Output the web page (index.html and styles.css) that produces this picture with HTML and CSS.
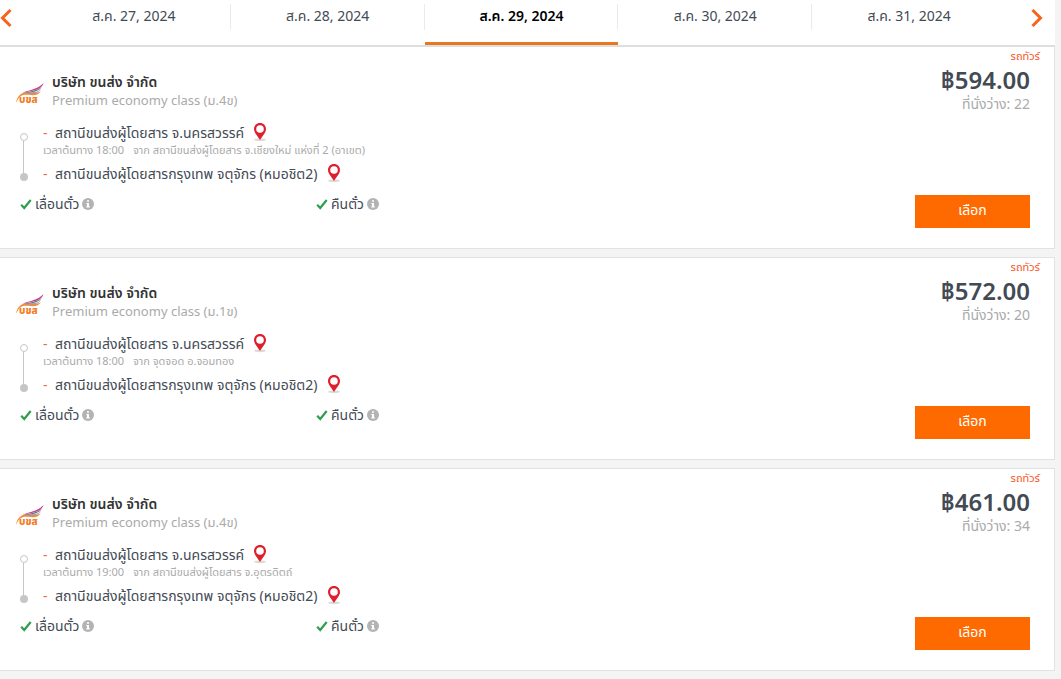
FILE: index.html
```html
<!DOCTYPE html>
<html lang="th">
<head>
<meta charset="utf-8">
<meta name="viewport" content="width=device-width, initial-scale=1">
<title>ส.ค. 29, 2024</title>
<link rel="stylesheet" href="styles.css">
</head>
<body>
<svg class="sprite" aria-hidden="true">
  <symbol id="logo" viewBox="0 0 28 22">
    <path d="M0 20C1 12.500 6 9 12 9C17 9 22 10.500 25 8C22 13 17 12.500 12 11.800C6 11 3 13 0 20Z" fill="#f08a3c"/>
    <path d="M7 9.500C14 7 22 6 27.500 0C26 6.500 17 8 7 9.500Z" fill="#c8408c"/>
    <path d="M6 10C14 8.300 21 8 26 3.500C23.500 9 15 9.500 6 10Z" fill="#6f7480"/>
    <path d="M9 10.200C15 9.600 21 9.800 25 6C22.500 10.500 16 11 9 10.200Z" fill="#85a5bd"/>
  </symbol>
  <symbol id="pin" viewBox="0 0 14 19">
    <ellipse cx="7" cy="16.800" rx="6" ry="1.400" fill="#dedbd5"/>
    <path d="M7 0C3.400 0 1 2.700 1 6C1 9.500 4 12 7 17C10 12 13 9.500 13 6C13 2.700 10.600 0 7 0Z" fill="#df1f2d"/>
    <circle cx="7" cy="6" r="3.800" fill="#fff"/>
  </symbol>
  <symbol id="check" viewBox="0 0 12 12">
    <path d="M1.200 6.800L4.200 10L10.700 2" fill="none" stroke="#2f9e4f" stroke-width="2.200"/>
  </symbol>
  <symbol id="info" viewBox="0 0 12 12">
    <circle cx="6" cy="6" r="6" fill="#b3b3b3"/>
    <path d="M5 2.200h2v1.600H5zM4.300 4.900H7v3.400h.8v1.200H4.300V8.300H5V6.100h-.7z" fill="#fff"/>
  </symbol>
  <symbol id="line" viewBox="0 0 10 50">
    <path d="M4.500 9V42" stroke="#c6c6c6"/>
    <circle cx="5" cy="5" r="3.500" fill="#fff" stroke="#c6c6c6"/>
    <circle cx="5" cy="45" r="4" fill="#c6c6c6"/>
  </symbol>
</svg>

<main class="page">
  <nav class="dates" aria-label="วันเดินทาง">
    <button class="arrow prev" type="button" aria-label="ก่อนหน้า"><svg viewBox="0 0 12 20"><path d="M10.500 2L2.500 10L10.500 18"/></svg></button>
    <a class="date" href="#">ส.ค. 27, 2024</a>
    <a class="date" href="#">ส.ค. 28, 2024</a>
    <a class="date active" href="#" aria-current="date">ส.ค. 29, 2024</a>
    <a class="date" href="#">ส.ค. 30, 2024</a>
    <a class="date" href="#">ส.ค. 31, 2024</a>
    <button class="arrow next" type="button" aria-label="ถัดไป"><svg viewBox="0 0 12 20"><path d="M1.500 2L9.500 10L1.500 18"/></svg></button>
  </nav>

  <article class="trip">
    <div class="details">
      <header class="operator">
        <div class="logo"><svg><use href="#logo"/></svg><span>บขส</span></div>
        <div><h2>บริษัท ขนส่ง จำกัด</h2><p>Premium economy class (ม.4ข)</p></div>
      </header>
      <div class="route">
        <svg class="track"><use href="#line"/></svg>
        <div>
          <p class="stop"><span class="dash">-</span>สถานีขนส่งผู้โดยสาร จ.นครสวรรค์<svg class="pin"><use href="#pin"/></svg></p>
          <p class="origin">เวลาต้นทาง 18:00 <span>จาก สถานีขนส่งผู้โดยสาร จ.เชียงใหม่ แห่งที่ 2 (อาเขต)</span></p>
          <p class="stop"><span class="dash">-</span>สถานีขนส่งผู้โดยสารกรุงเทพ จตุจักร (หมอชิต2)<svg class="pin"><use href="#pin"/></svg></p>
        </div>
      </div>
      <ul class="terms">
        <li><svg><use href="#check"/></svg>เลื่อนตั๋ว<svg><use href="#info"/></svg></li>
        <li><svg><use href="#check"/></svg>คืนตั๋ว<svg><use href="#info"/></svg></li>
      </ul>
    </div>
    <div class="booking">
      <p class="type">รถทัวร์</p>
      <p class="price">฿594.00</p>
      <p class="seats">ที่นั่งว่าง: 22</p>
      <button class="select" type="button">เลือก</button>
    </div>
  </article>

  <article class="trip">
    <div class="details">
      <header class="operator">
        <div class="logo"><svg><use href="#logo"/></svg><span>บขส</span></div>
        <div><h2>บริษัท ขนส่ง จำกัด</h2><p>Premium economy class (ม.1ข)</p></div>
      </header>
      <div class="route">
        <svg class="track"><use href="#line"/></svg>
        <div>
          <p class="stop"><span class="dash">-</span>สถานีขนส่งผู้โดยสาร จ.นครสวรรค์<svg class="pin"><use href="#pin"/></svg></p>
          <p class="origin">เวลาต้นทาง 18:00 <span>จาก จุดจอด อ.จอมทอง</span></p>
          <p class="stop"><span class="dash">-</span>สถานีขนส่งผู้โดยสารกรุงเทพ จตุจักร (หมอชิต2)<svg class="pin"><use href="#pin"/></svg></p>
        </div>
      </div>
      <ul class="terms">
        <li><svg><use href="#check"/></svg>เลื่อนตั๋ว<svg><use href="#info"/></svg></li>
        <li><svg><use href="#check"/></svg>คืนตั๋ว<svg><use href="#info"/></svg></li>
      </ul>
    </div>
    <div class="booking">
      <p class="type">รถทัวร์</p>
      <p class="price">฿572.00</p>
      <p class="seats">ที่นั่งว่าง: 20</p>
      <button class="select" type="button">เลือก</button>
    </div>
  </article>

  <article class="trip">
    <div class="details">
      <header class="operator">
        <div class="logo"><svg><use href="#logo"/></svg><span>บขส</span></div>
        <div><h2>บริษัท ขนส่ง จำกัด</h2><p>Premium economy class (ม.4ข)</p></div>
      </header>
      <div class="route">
        <svg class="track"><use href="#line"/></svg>
        <div>
          <p class="stop"><span class="dash">-</span>สถานีขนส่งผู้โดยสาร จ.นครสวรรค์<svg class="pin"><use href="#pin"/></svg></p>
          <p class="origin">เวลาต้นทาง 19:00 <span>จาก สถานีขนส่งผู้โดยสาร จ.อุตรดิตถ์</span></p>
          <p class="stop"><span class="dash">-</span>สถานีขนส่งผู้โดยสารกรุงเทพ จตุจักร (หมอชิต2)<svg class="pin"><use href="#pin"/></svg></p>
        </div>
      </div>
      <ul class="terms">
        <li><svg><use href="#check"/></svg>เลื่อนตั๋ว<svg><use href="#info"/></svg></li>
        <li><svg><use href="#check"/></svg>คืนตั๋ว<svg><use href="#info"/></svg></li>
      </ul>
    </div>
    <div class="booking">
      <p class="type">รถทัวร์</p>
      <p class="price">฿461.00</p>
      <p class="seats">ที่นั่งว่าง: 34</p>
      <button class="select" type="button">เลือก</button>
    </div>
  </article>
</main>
</body>
</html>
```

FILE: styles.css
```css
* { box-sizing: border-box; }
body {
  margin: 0;
  background: #f4f4f4;
  color: #434a54;
  font: 14px/20px "Noto Sans", "Noto Sans Thai", sans-serif;
}
h2, p, ul { margin: 0; padding: 0; }
button { font: inherit; border: 0; cursor: pointer; }
svg { flex: none; display: block; }
.sprite { position: absolute; width: 0; height: 0; }
.page { margin-right: 6px; }

.dates {
  display: flex;
  height: 47px;
  background: #fff;
  border-bottom: 2px solid #dedede;
}
.arrow { display: flex; padding: 8px 0 0; background: none; }
.arrow svg { width: 12px; height: 20px; fill: none; stroke: #f9621a; stroke-width: 3; }
.prev { width: 37px; }
.next { width: 49px; padding-left: 25px; }
.date {
  flex: 1;
  padding-top: 6px;
  border-bottom: 3px solid transparent;
  background: linear-gradient(#ebebeb, #ebebeb) right 4px / 1px 26px no-repeat;
  color: #434a54;
  text-align: center;
  text-decoration: none;
}
.date:nth-of-type(5) { background: none; }
.active { border-bottom-color: #e87722; color: #000; font-weight: 600; }

.trip {
  display: flex;
  justify-content: space-between;
  margin-bottom: 8px;
  background: #fff;
  border: 1px solid #e2e2e2;
  border-width: 1px 1px 1px 0;
}
.dates + .trip { border-top: 0; }
.details { padding: 26px 0 34px; }
.operator { display: flex; gap: 8px; padding-left: 16px; }
.operator h2 { font-size: 14px; font-weight: 600; line-height: 18px; color: #333; }
.operator p { font-size: 13px; line-height: 18px; color: #aaa; }
.logo { position: relative; width: 28px; }
.logo svg { width: 28px; height: 22px; margin-top: 10px; }
.logo span {
  position: absolute;
  left: 3px;
  top: 19px;
  color: #f47b20;
  font-size: 10px;
  font-weight: 800;
  line-height: 14px;
}
.route { display: flex; gap: 14px; padding: 14px 0 0 19px; }
.track { width: 10px; height: 50px; margin-top: 9px; }
.stop { display: flex; white-space: nowrap; }
.dash { width: 12px; color: #e8703a; }
.pin { width: 14px; height: 19px; margin-left: 9px; }
.origin { height: 21px; font-size: 11px; line-height: 14px; color: #aaa; white-space: nowrap; }
.origin span { margin-left: 6px; }
.terms { display: grid; grid-template-columns: 296px 1fr; padding: 10px 0 0 20px; list-style: none; }
.terms li { display: flex; align-items: center; gap: 3px; }
.terms svg { width: 12px; height: 12px; }

.booking { display: flex; flex-direction: column; align-items: flex-end; padding-right: 24px; }
.type { margin-right: -10px; font-size: 11px; line-height: 17px; color: #f9541c; }
.price { font-size: 24px; font-weight: 600; line-height: 32px; }
.seats { line-height: 16px; color: #aaa; }
.select { width: 115px; height: 33px; margin-top: 83px; padding: 0 0 3px; background: #ff6a00; color: #fff; }
```
